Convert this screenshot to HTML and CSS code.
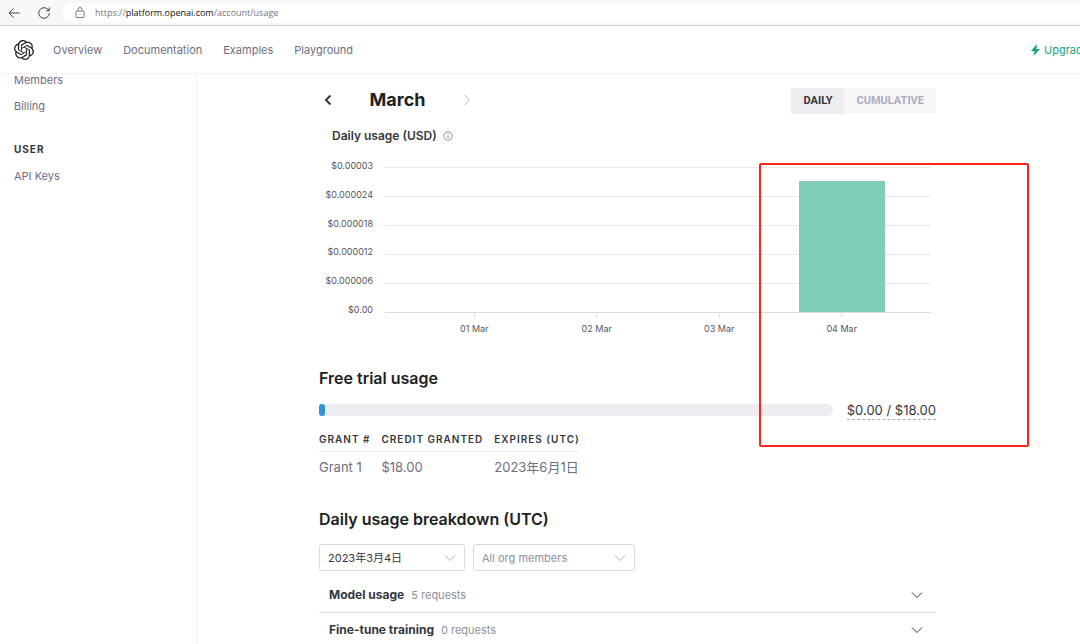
FILE: index.html
```html
<!DOCTYPE html>
<html lang="en">
<head>
<meta charset="utf-8">
<title>Usage - OpenAI API</title>
<link rel="stylesheet" href="styles.css">
</head>
<body>
<div class="browser-bar">
  <button class="browser-button" aria-label="Back"><svg width="12" height="12" viewBox="0 0 12 12"><path d="M11.500 6H1M5.500 1.500L1 6l4.500 4.500"/></svg></button>
  <button class="browser-button" aria-label="Reload"><svg width="12" height="12" viewBox="0 0 12 12"><path d="M11.300 6.200A5.300 5.300 0 1 1 9.500 2l1.500 1.400M11.300.5v3.200H8.200"/></svg></button>
  <div class="address">
    <svg width="10" height="12" viewBox="0 0 10 12"><rect x="1" y="4" width="8" height="6.500" rx="1"/><path d="M3 4V2.500a2 2 0 0 1 4 0V4M5 6.700v1"/></svg>
    <span>https://<b>platform.openai.com</b>/account/usage</span>
  </div>
</div>
<header class="site-header">
  <a class="logo" href="#" aria-label="OpenAI"><svg width="20" height="20" viewBox="0 0 24 24"><path d="M22.2819 9.8211a5.9847 5.9847 0 0 0-.5157-4.9108 6.0462 6.0462 0 0 0-6.5098-2.9A6.0651 6.0651 0 0 0 4.9807 4.1818a5.9847 5.9847 0 0 0-3.9977 2.9 6.0462 6.0462 0 0 0 .7427 7.0966 5.98 5.98 0 0 0 .511 4.9107 6.051 6.051 0 0 0 6.5146 2.9001A5.9847 5.9847 0 0 0 13.2599 24a6.0557 6.0557 0 0 0 5.7718-4.2058 5.9894 5.9894 0 0 0 3.9977-2.9001 6.0557 6.0557 0 0 0-.7475-7.0729zm-9.022 12.6081a4.4755 4.4755 0 0 1-2.8764-1.0408l.1419-.0804 4.7783-2.7582a.7948.7948 0 0 0 .3927-.6813v-6.7369l2.02 1.1686a.071.071 0 0 1 .038.052v5.5826a4.504 4.504 0 0 1-4.4945 4.4944zm-9.6607-4.1254a4.4708 4.4708 0 0 1-.5346-3.0137l.142.0852 4.783 2.7582a.7712.7712 0 0 0 .7806 0l5.8428-3.3685v2.3324a.0804.0804 0 0 1-.0332.0615L9.74 19.9502a4.4992 4.4992 0 0 1-6.1408-1.6464zM2.3408 7.8956a4.485 4.485 0 0 1 2.3655-1.9728V11.6a.7664.7664 0 0 0 .3879.6765l5.8144 3.3543-2.0201 1.1685a.0757.0757 0 0 1-.071 0l-4.8303-2.7865A4.504 4.504 0 0 1 2.3408 7.872zm16.5963 3.8558L13.1038 8.364 15.1192 7.2a.0757.0757 0 0 1 .071 0l4.8303 2.7913a4.4944 4.4944 0 0 1-.6765 8.1042v-5.6772a.79.79 0 0 0-.407-.667zm2.0107-3.0231l-.142-.0852-4.7735-2.7818a.7759.7759 0 0 0-.7854 0L9.409 9.2297V6.8974a.0662.0662 0 0 1 .0284-.0615l4.8303-2.7866a4.4992 4.4992 0 0 1 6.6802 4.66zM8.3065 12.863l-2.02-1.1638a.0804.0804 0 0 1-.038-.0567V6.0742a4.4992 4.4992 0 0 1 7.3757-3.4537l-.142.0805L8.704 5.459a.7948.7948 0 0 0-.3927.6813zm1.0976-2.3654l2.602-1.4998 2.6069 1.4998v2.9994l-2.5974 1.4997-2.6067-1.4997Z"/></svg></a>
  <nav class="nav">
    <a href="#">Overview</a>
    <a href="#">Documentation</a>
    <a href="#">Examples</a>
    <a href="#">Playground</a>
  </nav>
  <a class="upgrade" href="#"><svg width="9" height="12" viewBox="0 0 9 12"><path d="M6 0L0 7h3.500L2.500 12 9 5H5.300z"/></svg>Upgrade</a>
</header>
<div class="page">
  <aside class="sidebar">
    <a href="#">Members</a>
    <a href="#">Billing</a>
    <h2>USER</h2>
    <a href="#">API Keys</a>
  </aside>
  <main class="content">
    <div class="toolbar">
      <div class="month">
        <button aria-label="Previous month"><svg width="8" height="12" viewBox="0 0 8 12"><path d="M6.500 1.500L2 6l4.500 4.500"/></svg></button>
        <h1>March</h1>
        <button aria-label="Next month" disabled><svg width="8" height="12" viewBox="0 0 8 12"><path d="M1.500 1L6.500 6l-5 5"/></svg></button>
      </div>
      <div class="toggle">
        <button class="active">DAILY</button>
        <button>CUMULATIVE</button>
      </div>
    </div>

    <section class="usage">
      <h3>Daily usage (USD)
        <svg width="10" height="10" viewBox="0 0 10 10"><circle cx="5" cy="5" r="4.200"/><path d="M5 4.400v3M5 2.500v1"/></svg>
      </h3>
      <div class="chart">
        <div class="y-axis">
          <span>$0.00003</span><span>$0.000024</span><span>$0.000018</span><span>$0.000012</span><span>$0.000006</span><span>$0.00</span>
        </div>
        <div class="plot">
          <div class="bars"><i></i><i></i><i></i><i class="bar" style="height:90.5%"></i></div>
        </div>
        <div class="x-axis"><span>01 Mar</span><span>02 Mar</span><span>03 Mar</span><span>04 Mar</span></div>
      </div>
      <div class="highlight"></div>
    </section>

    <section class="trial">
      <h2>Free trial usage</h2>
      <div class="progress-row">
        <div class="progress"><div class="progress-fill" style="width:1%"></div></div>
        <span class="amount">$0.00 / $18.00</span>
      </div>
      <table class="grants">
        <thead><tr><th>GRANT #</th><th>CREDIT GRANTED</th><th>EXPIRES (UTC)</th></tr></thead>
        <tbody><tr><td>Grant 1</td><td>$18.00</td><td>2023年6月1日</td></tr></tbody>
      </table>
    </section>

    <section class="breakdown">
      <h2>Daily usage breakdown (UTC)</h2>
      <div class="filters">
        <div class="select date">
          <select aria-label="Date"><option>2023年3月4日</option></select>
          <svg width="12" height="8" viewBox="0 0 12 8"><path d="M1 1.500l5 5 5-5"/></svg>
        </div>
        <div class="select members">
          <select aria-label="Members"><option>All org members</option></select>
          <svg width="12" height="8" viewBox="0 0 12 8"><path d="M1 1.500l5 5 5-5"/></svg>
        </div>
      </div>
      <button class="row"><b>Model usage</b><span>5 requests</span><svg width="12" height="8" viewBox="0 0 12 8"><path d="M1 1.500l5 5 5-5"/></svg></button>
      <button class="row"><b>Fine-tune training</b><span>0 requests</span><svg width="12" height="8" viewBox="0 0 12 8"><path d="M1 1.500l5 5 5-5"/></svg></button>
    </section>
  </main>
</div>
</body>
</html>
```
FILE: styles.css
```css
* { box-sizing: border-box; }
body {
  margin: 0;
  height: 100vh;
  display: flex;
  flex-direction: column;
  overflow: hidden;
  background: #fff;
  color: #353740;
  font: 12px/16px Inter, "Noto Sans CJK SC", sans-serif;
}
a { color: inherit; text-decoration: none; }
button { border: 0; padding: 0; background: none; font: inherit; color: inherit; }
h1, h2, h3 { margin: 0; font-weight: 600; }
svg { display: block; fill: none; stroke: currentColor; flex: none; }

.browser-bar {
  flex: none;
  display: flex;
  align-items: center;
  height: 26px;
  padding-left: 8px;
  gap: 18px;
  background: #f7f7f7;
  border-bottom: 1px solid #cfcfcf;
  color: #444;
}
.browser-button { width: 12px; }
.address {
  flex: 1;
  display: flex;
  align-items: center;
  gap: 10px;
  height: 20px;
  margin-left: -6px;
  margin-right: -12px;
  padding-left: 13px;
  border-radius: 10px;
  background: #fff;
  color: #767676;
  font: 9px/12px "Open Sans", sans-serif;
}
.address b { font-weight: 400; color: #111; }

.site-header {
  flex: none;
  display: flex;
  align-items: center;
  height: 48px;
  padding-left: 14px;
  border-bottom: 1px solid #f2f2f4;
  color: #6e6e80;
}
.logo { color: #222; }
.logo svg { fill: currentColor; stroke: none; }
.nav { display: flex; gap: 21px; margin-left: 19px; font-size: 11px; }
.upgrade {
  display: flex;
  align-items: center;
  gap: 4px;
  width: 49px;
  margin-left: auto;
  overflow: hidden;
  white-space: nowrap;
  color: #10a37f;
  font-size: 11px;
}
.upgrade svg { fill: currentColor; stroke: none; }

.page { flex: 1; min-height: 0; display: flex; overflow: hidden; }
.sidebar {
  flex: none;
  display: flex;
  flex-direction: column;
  gap: 14px;
  width: 198px;
  padding: 0 14px;
  border-right: 2px solid #f7f7f8;
  color: #6e6e80;
  line-height: 12px;
  font-size: 11px;
}
.sidebar h2 {
  margin-top: 17px;
  font-size: 10px;
  line-height: 12px;
  letter-spacing: 1px;
  font-weight: 700;
  color: #353740;
}
.sidebar h2 + a { margin-top: 1px; }

.content { flex: 1; padding: 14px 144px 0 121px; }
.toolbar { display: flex; justify-content: space-between; height: 26px; }
.month { display: flex; align-items: center; justify-content: space-between; width: 147px; height: 24px; margin-left: 5px; }
.month h1 { font-size: 18px; line-height: 24px; font-weight: 700; color: #202123; }
.month button { stroke-width: 2; }
.month button:disabled { color: #b4b4bf; stroke-width: 1; }
.toggle {
  display: flex;
  border-radius: 2px;
  overflow: hidden;
  background: #f7f7f8;
  color: #acacbe;
  font: 500 11px/26px Roboto, sans-serif;
}
.toggle button { padding: 0 12px; font-weight: 700; }
.toggle .active { background: #ececf1; color: #353740; }

.usage { position: relative; }
.usage h3 {
  display: flex;
  align-items: center;
  gap: 6px;
  padding: 14px 0 0 13px;
  font-size: 12px;
  line-height: 16px;
}
.usage h3 svg { color: #8e8ea0; stroke-width: 1; }
.chart {
  display: grid;
  grid-template-columns: 54px 1fr;
  column-gap: 12px;
  padding: 23px 5px 0 0;
  color: #55565c;
  font: 9px/12px Inter, sans-serif;
}
.y-axis {
  display: flex;
  flex-direction: column;
  justify-content: space-between;
  margin: -7px 0 -3px;
  text-align: right;
}
.plot {
  height: 146px;
  padding: 0 28px;
  border-bottom: 1px solid #dcdcdf;
  background: repeating-linear-gradient(#e8e8ea 0 1px, transparent 1px 29px);
}
.bars { display: grid; grid-template-columns: repeat(4, 1fr); align-items: end; height: 100%; }
.bar { width: 70%; justify-self: center; background: #80cdb8; }
.x-axis {
  grid-column: 2;
  display: grid;
  grid-template-columns: repeat(4, 1fr);
  padding: 0 28px;
  text-align: center;
}
.x-axis span::before {
  content: "";
  display: block;
  width: 1px;
  height: 5px;
  margin: 0 auto 5px;
  background: #e0e0e3;
}
.highlight {
  position: absolute;
  top: 49px;
  right: -93px;
  width: 270px;
  height: 284px;
  border: 2px solid #fb241b;
  border-radius: 2px;
  pointer-events: none;
}

.trial h2, .breakdown h2 { font-size: 16px; line-height: 24px; color: #202123; }
.trial { padding-top: 31px; }
.progress-row { display: flex; align-items: center; gap: 14px; height: 20px; margin-top: 10px; }
.progress { flex: 1; height: 12px; border-radius: 3px 6px 6px 3px; background: #ececf1; }
.progress-fill { min-width: 6px; height: 100%; border-radius: 3px; background: #2d95d6; }
.amount { border-bottom: 1px dashed #acacbe; font-size: 13px; line-height: 18px; }
.grants { margin-top: 8px; border-collapse: collapse; color: #6e6e80; }
.grants th {
  padding: 3px 11px 4px 0;
  border-bottom: 1px solid #ececf1;
  color: #353740;
  font-size: 10px;
  line-height: 16px;
  font-weight: 600;
  letter-spacing: 1px;
  text-align: left;
}
.grants td { padding: 7px 11px 7px 0; font-size: 13px; line-height: 16px; }
.grants th:last-child, .grants td:last-child { padding-right: 0; }

.breakdown { padding-top: 25px; }
.filters { display: flex; gap: 8px; margin-top: 13px; font-size: 11px; }
.select { position: relative; }
.date { width: 146px; }
.members { width: 162px; color: #8e8ea0; }
.select select {
  appearance: none;
  width: 100%;
  height: 27px;
  padding: 0 8px;
  border: 1px solid #d9d9e3;
  border-radius: 3px;
  background: #fff;
  color: inherit;
  font: inherit;
}
.select svg { position: absolute; right: 9px; top: 10px; color: #acacbe; }
.row {
  display: flex;
  align-items: center;
  gap: 7px;
  width: 100%;
  height: 35px;
  padding: 0 13px 0 10px;
  border-bottom: 1px solid #d9d9e3;
}
.filters + .row { margin-top: 7px; }
.row b { font-weight: 700; }
.row span { color: #8e8ea0; font-size: 11px; }
.row svg { margin-left: auto; }
```
